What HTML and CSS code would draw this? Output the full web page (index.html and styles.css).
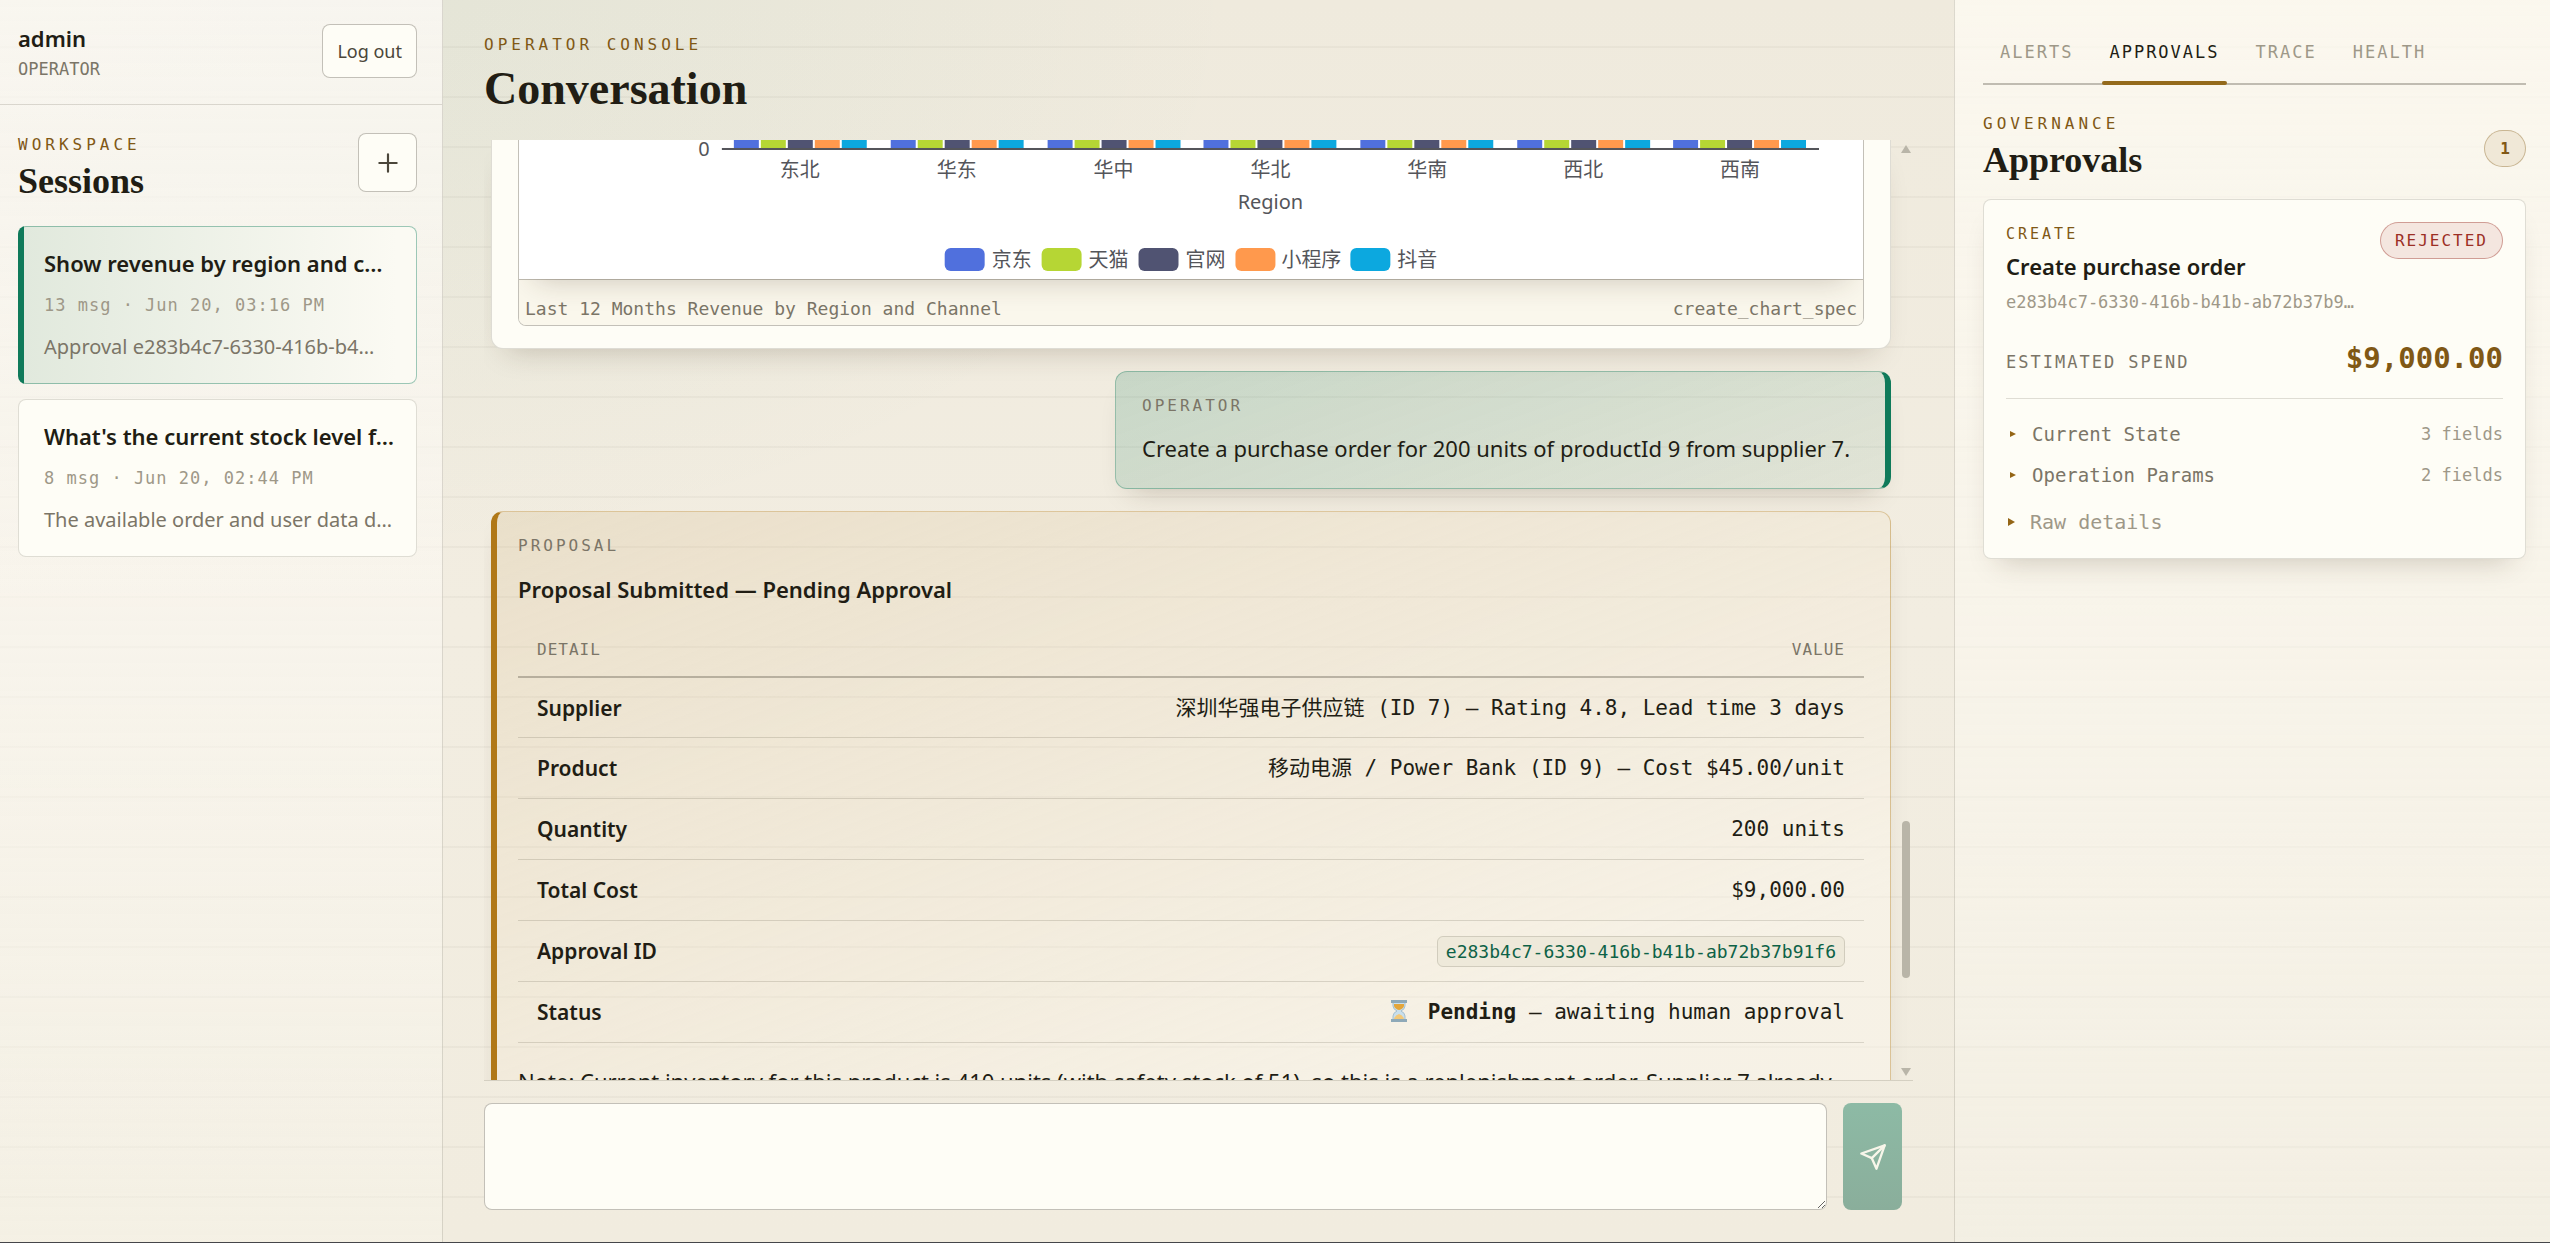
FILE: index.html
```html
<!DOCTYPE html>
<html lang="en">
<head>
    <meta charset="UTF-8">
    <meta name="viewport" content="width=device-width, initial-scale=1.0">
    <title>Operator Console</title>
    <link rel="stylesheet" href="styles.css">
</head>
<body>
    <div class="app">
        <aside class="sidebar">
            <div class="account">
                <div>
                    <div class="account-name">admin</div>
                    <div class="account-role">OPERATOR</div>
                </div>
                <button type="button" class="logout">Log out</button>
            </div>
            <div class="sessions">
                <div class="sessions-head">
                    <div>
                        <p class="eyebrow">WORKSPACE</p>
                        <h2 class="panel-title">Sessions</h2>
                    </div>
                    <button type="button" class="new-session" aria-label="New session">
                        <svg width="26" height="26" viewBox="0 0 24 24" fill="none" stroke="currentColor" stroke-width="2" stroke-linecap="round"><path d="M12 4v16M4 12h16"/></svg>
                    </button>
                </div>
                <button type="button" class="session active">
                    <span class="session-title">Show revenue by region and c…</span>
                    <span class="session-meta">13 msg · Jun 20, 03:16 PM</span>
                    <span class="session-preview">Approval e283b4c7-6330-416b-b4…</span>
                </button>
                <button type="button" class="session">
                    <span class="session-title">What's the current stock level f…</span>
                    <span class="session-meta">8 msg · Jun 20, 02:44 PM</span>
                    <span class="session-preview">The available order and user data d…</span>
                </button>
            </div>
        </aside>

        <main class="conversation">
            <header class="conversation-head">
                <p class="eyebrow">OPERATOR CONSOLE</p>
                <h1>Conversation</h1>
            </header>

            <div class="thread">
                <div class="messages">
                    <article class="message message-chart">
                        <figure class="chart">
                            <svg class="chart-plot" viewBox="519 140 1345 139" role="img" aria-label="Revenue by region and channel">
                                <defs>
                                    <g id="bars">
                                        <rect x="0" y="140" width="25" height="8" fill="#5070dd"/>
                                        <rect x="27" y="140" width="25" height="8" fill="#b6d634"/>
                                        <rect x="54" y="140" width="25" height="8" fill="#505372"/>
                                        <rect x="81" y="140" width="25" height="8" fill="#ff994d"/>
                                        <rect x="108" y="140" width="25" height="8" fill="#0ca8df"/>
                                    </g>
                                </defs>
                                <use href="#bars" x="734"/>
                                <use href="#bars" x="891"/>
                                <use href="#bars" x="1048"/>
                                <use href="#bars" x="1204"/>
                                <use href="#bars" x="1361"/>
                                <use href="#bars" x="1518"/>
                                <use href="#bars" x="1674"/>
                                <rect x="722" y="148" width="1098" height="2" fill="#54555a"/>
                                <g class="chart-text">
                                    <text x="704" y="156" text-anchor="middle">0</text>
                                    <text x="800" y="177" text-anchor="middle">东北</text>
                                    <text x="957" y="177" text-anchor="middle">华东</text>
                                    <text x="1114" y="177" text-anchor="middle">华中</text>
                                    <text x="1271" y="177" text-anchor="middle">华北</text>
                                    <text x="1428" y="177" text-anchor="middle">华南</text>
                                    <text x="1584" y="177" text-anchor="middle">西北</text>
                                    <text x="1741" y="177" text-anchor="middle">西南</text>
                                    <text x="1271" y="209" text-anchor="middle">Region</text>
                                    <text x="992" y="267">京东</text>
                                    <text x="1089" y="267">天猫</text>
                                    <text x="1186" y="267">官网</text>
                                    <text x="1282" y="267">小程序</text>
                                    <text x="1398" y="267">抖音</text>
                                </g>
                                <rect x="945" y="248" width="40" height="23" rx="6" fill="#5070dd"/>
                                <rect x="1042" y="248" width="40" height="23" rx="6" fill="#b6d634"/>
                                <rect x="1139" y="248" width="40" height="23" rx="6" fill="#505372"/>
                                <rect x="1236" y="248" width="40" height="23" rx="6" fill="#ff994d"/>
                                <rect x="1351" y="248" width="40" height="23" rx="6" fill="#0ca8df"/>
                            </svg>
                            <figcaption class="chart-caption">
                                <span>Last 12 Months Revenue by Region and Channel</span>
                                <span>create_chart_spec</span>
                            </figcaption>
                        </figure>
                    </article>

                    <article class="message message-user">
                        <p class="message-label">OPERATOR</p>
                        <p class="message-text">Create a purchase order for 200 units of productId 9 from supplier 7.</p>
                    </article>

                    <article class="message message-proposal">
                        <p class="message-label">PROPOSAL</p>
                        <h3>Proposal Submitted — Pending Approval</h3>
                        <table>
                            <thead>
                                <tr><th scope="col">DETAIL</th><th scope="col">VALUE</th></tr>
                            </thead>
                            <tbody>
                                <tr><th scope="row">Supplier</th><td>深圳华强电子供应链 (ID 7) — Rating 4.8, Lead time 3 days</td></tr>
                                <tr><th scope="row">Product</th><td>移动电源 / Power Bank (ID 9) — Cost $45.00/unit</td></tr>
                                <tr><th scope="row">Quantity</th><td>200 units</td></tr>
                                <tr><th scope="row">Total Cost</th><td>$9,000.00</td></tr>
                                <tr><th scope="row">Approval ID</th><td><code>e283b4c7-6330-416b-b41b-ab72b37b91f6</code></td></tr>
                                <tr>
                                    <th scope="row">Status</th>
                                    <td>
                                        <svg class="hourglass" width="28" height="22" viewBox="0 0 28 22" aria-hidden="true">
                                            <path d="M6 2h12v4q0 3-4 5 4 2 4 5v4H6v-4q0-3 4-5-4-2-4-5z" fill="#c9dfec" stroke="#a5bfce"/>
                                            <path d="M7 4h10v2q-1 3-5 4-4-1-5-4z" fill="#e3a53a"/>
                                            <path d="M12 14q4 1 5 5H7q1-4 5-5z" fill="#f3c877"/>
                                            <path d="M4 0h16v3H4zM4 19h16v3H4z" fill="#8ea9b8"/>
                                        </svg>
                                        <strong>Pending</strong> — awaiting human approval
                                    </td>
                                </tr>
                            </tbody>
                        </table>
                        <p class="message-text">Note: Current inventory for this product is 410 units (with safety stock of 51), so this is a replenishment order. Supplier 7 already</p>
                    </article>
                </div>
                <div class="scrollbar" aria-hidden="true">
                    <svg width="10" height="8" viewBox="0 0 10 8"><path d="M5 0l5 8H0z" fill="#b9b5a8"/></svg>
                    <div class="scrollbar-track"><div class="scrollbar-thumb"></div></div>
                    <svg width="10" height="8" viewBox="0 0 10 8"><path d="M0 0h10L5 8z" fill="#b9b5a8"/></svg>
                </div>
            </div>

            <form class="composer">
                <textarea aria-label="Message"></textarea>
                <button type="submit" class="send" aria-label="Send">
                    <svg width="28" height="28" viewBox="0 0 24 24" fill="none" stroke="currentColor" stroke-width="2" stroke-linecap="round" stroke-linejoin="round"><path d="M22 2 2 9l9 4 4 9z"/><path d="M22 2 11 13"/></svg>
                </button>
            </form>
        </main>

        <aside class="inspector">
            <nav class="tabs">
                <button type="button">ALERTS</button>
                <button type="button" class="selected">APPROVALS</button>
                <button type="button">TRACE</button>
                <button type="button">HEALTH</button>
            </nav>
            <div class="approvals-head">
                <div>
                    <p class="eyebrow">GOVERNANCE</p>
                    <h2 class="panel-title">Approvals</h2>
                </div>
                <span class="count">1</span>
            </div>
            <section class="approval">
                <div class="approval-top">
                    <div>
                        <p class="approval-kind">CREATE</p>
                        <h3>Create purchase order</h3>
                        <p class="approval-id">e283b4c7-6330-416b-b41b-ab72b37b9…</p>
                    </div>
                    <span class="status">REJECTED</span>
                </div>
                <div class="spend">
                    <span class="spend-label">ESTIMATED SPEND</span>
                    <span class="spend-value">$9,000.00</span>
                </div>
                <button type="button" class="fold">
                    <svg width="14" height="8" viewBox="0 0 14 8"><path d="M4 1l6 3-6 3z" fill="currentColor"/></svg>
                    <span class="fold-name">Current State</span>
                    <span class="fold-count">3 fields</span>
                </button>
                <button type="button" class="fold">
                    <svg width="14" height="8" viewBox="0 0 14 8"><path d="M4 1l6 3-6 3z" fill="currentColor"/></svg>
                    <span class="fold-name">Operation Params</span>
                    <span class="fold-count">2 fields</span>
                </button>
                <button type="button" class="fold fold-raw">
                    <svg width="12" height="8" viewBox="0 0 12 8"><path d="M2 0l7 4-7 4z" fill="currentColor"/></svg>
                    <span class="fold-name">Raw details</span>
                </button>
            </section>
        </aside>
    </div>
</body>
</html>
```

FILE: styles.css
```css
:root {
    --ink: #211d14;
    --muted: #7b7567;
    --faint: #9e9888;
    --gold: #805815;
    --green: #0f7a5a;
    --paper: #fefdf6;
    --line: rgba(60, 54, 40, 0.16);
    --line-strong: rgba(60, 54, 40, 0.3);
    --sans: "Noto Sans", "Noto Sans CJK SC", sans-serif;
    --mono: "DejaVu Sans Mono", "Noto Sans CJK SC", monospace;
    --serif: "Liberation Serif", serif;
}
* {
    box-sizing: border-box;
}
body {
    margin: 0;
    font-family: var(--sans);
    font-size: 21px;
    line-height: 32px;
    color: var(--ink);
    background:
        radial-gradient(ellipse 35% 45% at 14% 0, rgba(15, 122, 90, 0.05), transparent),
        linear-gradient(180deg, #efeadd, #f2ede1 50%, #f1ecdf);
}
h1, h2, h3, p, figure {
    margin: 0;
}
button {
    font: inherit;
    color: inherit;
    cursor: pointer;
}
.app {
    display: grid;
    grid-template-columns: 443px minmax(0, 1fr) 596px;
    grid-template-rows: minmax(0, 1fr);
    height: 100vh;
    border-bottom: 1px solid #45464a;
    background: repeating-linear-gradient(180deg, transparent 0 46px, rgba(60, 54, 40, 0.04) 46px 48px, transparent 48px 50px);
}
.eyebrow {
    font-family: var(--mono);
    font-size: 16px;
    line-height: 24px;
    letter-spacing: 4px;
    color: var(--gold);
}
.panel-title {
    font-family: var(--serif);
    font-size: 36px;
    line-height: 48px;
    font-weight: bold;
}

/* sidebar */
.sidebar {
    border-right: 1px solid var(--line);
    background: linear-gradient(180deg, rgba(254, 251, 247, 0.75), rgba(248, 246, 236, 0.4));
}
.account {
    display: flex;
    justify-content: space-between;
    align-items: flex-start;
    height: 105px;
    padding: 24px 25px 0 18px;
    border-bottom: 1px solid var(--line);
}
.account-name {
    font-size: 22px;
    line-height: 28px;
    font-weight: 600;
}
.account-role {
    font-family: var(--mono);
    font-size: 17px;
    line-height: 34px;
    color: var(--muted);
}
.logout,
.new-session {
    background: var(--paper);
    border: 1px solid var(--line-strong);
    border-radius: 8px;
    color: #4b463a;
}
.logout {
    height: 54px;
    padding: 0 14px;
    font-size: 18px;
}
.sessions {
    display: flex;
    flex-direction: column;
    gap: 15px;
    padding: 28px 25px 0 18px;
}
.sessions-head {
    display: flex;
    justify-content: space-between;
    align-items: flex-start;
    height: 78px;
}
.new-session {
    display: grid;
    place-items: center;
    width: 59px;
    height: 59px;
    padding: 0;
}
.session {
    display: flex;
    flex-direction: column;
    gap: 10px;
    height: 158px;
    padding: 20px 12px 0 25px;
    text-align: left;
    white-space: nowrap;
    overflow: hidden;
    background: var(--paper);
    border: 1px solid var(--line);
    border-radius: 8px;
}
.session.active {
    border-color: rgba(15, 122, 90, 0.4);
    background: linear-gradient(90deg, var(--green) 6px, #e1e9dd 6px, #fbfaf3 95%) border-box;
}
.session-title {
    font-size: 22px;
    font-weight: 600;
}
.session-meta {
    font-family: var(--mono);
    font-size: 17px;
    letter-spacing: 1px;
    color: var(--faint);
}
.session-preview {
    font-size: 20px;
    color: var(--muted);
}

/* conversation */
.conversation {
    display: flex;
    flex-direction: column;
    padding: 33px 41px 32px;
}
.conversation-head {
    height: 107px;
}
.conversation-head h1 {
    font-family: var(--serif);
    font-size: 46px;
    line-height: 64px;
}
.thread {
    flex: 1;
    display: flex;
    min-height: 0;
    overflow: hidden;
    padding-left: 7px;
}
.messages {
    flex: 1;
    display: flex;
    flex-direction: column;
    gap: 22px;
    min-width: 0;
}
.message {
    flex-shrink: 0;
    border: 1px solid var(--line);
    border-radius: 12px;
    box-shadow: 0 16px 28px -16px rgba(60, 40, 20, 0.25);
}
.message-chart {
    padding: 0 26px 22px;
    border-top: 0;
    border-radius: 0 0 12px 12px;
    background: var(--paper);
}
.chart {
    border: 1px solid var(--line-strong);
    border-top: 0;
    border-radius: 0 0 8px 8px;
    overflow: hidden;
}
.chart-plot {
    position: relative;
    display: block;
    width: 100%;
    background: #fff;
    box-shadow: 0 16px 28px -16px rgba(60, 40, 20, 0.25);
}
.chart-text {
    font-family: "Noto Sans", "Noto Sans CJK SC", sans-serif;
    font-size: 20px;
    fill: #54555a;
}
.chart-caption {
    display: flex;
    justify-content: space-between;
    padding: 13px 6px 0;
    height: 46px;
    border-top: 1px solid var(--line-strong);
    background: #faf7ec;
    font-family: var(--mono);
    font-size: 18px;
    color: var(--muted);
}
.message-label {
    font-family: var(--mono);
    font-size: 16px;
    line-height: 24px;
    letter-spacing: 3px;
    color: var(--muted);
}
.message-text {
    font-size: 22px;
    line-height: 36px;
}
.message-user {
    align-self: flex-end;
    display: flex;
    flex-direction: column;
    gap: 12px;
    min-width: 776px;
    padding: 22px 21px 22px 26px;
    border-color: rgba(15, 122, 90, 0.35);
    border-right: 6px solid var(--green);
    background: linear-gradient(160deg, rgba(15, 122, 90, 0.18), rgba(15, 122, 90, 0.07));
}
.message-proposal {
    padding: 22px 26px 22px 21px;
    border-color: rgba(176, 120, 24, 0.35);
    border-left: 6px solid #b07818;
    background: linear-gradient(160deg, rgba(176, 120, 24, 0.11), rgba(255, 250, 240, 0.4) 80%);
}
.message-proposal .message-label {
    margin-bottom: 13px;
}
.message-proposal h3 {
    font-size: 22px;
    line-height: 36px;
    font-weight: 600;
}
.message-proposal table {
    width: 100%;
    margin: 18px 0 20px;
    border-collapse: collapse;
}
.message-proposal th,
.message-proposal td {
    height: 61px;
    padding: 0 19px;
    text-align: left;
    border-bottom: 1px solid var(--line);
}
.message-proposal thead th {
    height: 52px;
    font-family: var(--mono);
    font-size: 16px;
    font-weight: normal;
    letter-spacing: 1px;
    color: var(--muted);
    border-bottom: 2px solid var(--line-strong);
}
.message-proposal tbody th {
    font-weight: 600;
}
.message-proposal td,
.message-proposal thead th:last-child {
    text-align: right;
}
.message-proposal td {
    font-family: var(--mono);
}
.message-proposal code {
    padding: 4px 8px;
    font-family: var(--mono);
    font-size: 18px;
    color: #0d6247;
    background: #eee9da;
    border: 1px solid var(--line);
    border-radius: 6px;
}
.hourglass {
    vertical-align: -3px;
}
.scrollbar {
    display: flex;
    flex-direction: column;
    align-items: center;
    width: 22px;
    padding: 5px 0 4px 8px;
}
.scrollbar-track {
    flex: 1;
    width: 8px;
    padding-top: 668px;
}
.scrollbar-thumb {
    height: 157px;
    border-radius: 4px;
    background: #b9b5a8;
}
.composer {
    display: flex;
    gap: 16px;
    padding: 22px 11px 0 0;
    border-top: 1px solid var(--line);
}
.composer textarea {
    flex: 1;
    height: 107px;
    padding: 16px;
    font: inherit;
    color: inherit;
    background: var(--paper);
    border: 1px solid var(--line-strong);
    border-radius: 8px;
}
.send {
    display: grid;
    place-items: center;
    width: 59px;
    padding: 0;
    border: 0;
    border-radius: 8px;
    color: #f8f6ea;
    background: linear-gradient(180deg, #8dbaa5, #8aae9b);
}

/* inspector */
.inspector {
    padding: 32px 24px 0 28px;
    border-left: 1px solid var(--line);
    background: linear-gradient(180deg, rgba(255, 252, 244, 0.75), rgba(248, 246, 236, 0.3));
}
.tabs {
    display: flex;
    gap: 2px;
    height: 53px;
    border-bottom: 2px solid var(--line-strong);
}
.tabs button {
    display: flex;
    flex-direction: column;
    justify-content: space-between;
    margin-bottom: -2px;
    padding: 4px 17px 0;
    border: 0;
    background: none;
    font-family: var(--mono);
    font-size: 17px;
    letter-spacing: 2px;
    color: var(--faint);
}
.tabs .selected {
    color: var(--ink);
}
.tabs .selected::after {
    content: "";
    height: 4px;
    margin: 0 -7px;
    border-radius: 2px;
    background: #946a1c;
}
.approvals-head {
    display: flex;
    justify-content: space-between;
    align-items: center;
    margin: 27px 0 15px;
}
.count,
.status {
    height: 37px;
    padding: 0 15px;
    font-family: var(--mono);
    font-size: 16px;
    line-height: 35px;
    font-weight: bold;
    border: 1px solid rgba(128, 88, 21, 0.35);
    border-radius: 19px;
    color: var(--gold);
    background: #f0e8d7;
}
.status {
    letter-spacing: 2px;
    padding: 0 14px;
    font-weight: normal;
    color: #9c2f25;
    border-color: rgba(156, 47, 37, 0.4);
    background: #f4e6df;
}
.approval {
    padding: 22px 22px 16px;
    border: 1px solid var(--line);
    border-radius: 8px;
    background: var(--paper);
    box-shadow: 0 16px 28px -16px rgba(60, 40, 20, 0.25);
}
.approval-top {
    display: flex;
    justify-content: space-between;
    align-items: flex-start;
}
.approval-kind {
    font-family: var(--mono);
    font-size: 15px;
    line-height: 24px;
    letter-spacing: 3px;
    color: var(--gold);
}
.approval h3 {
    font-size: 22px;
    line-height: 40px;
    font-weight: 600;
}
.approval-id {
    font-family: var(--mono);
    font-size: 17px;
    line-height: 32px;
    color: var(--faint);
}
.spend {
    display: flex;
    justify-content: space-between;
    align-items: baseline;
    margin-bottom: 14px;
    padding: 24px 0 20px;
    border-bottom: 1px solid var(--line);
}
.spend-label {
    font-family: var(--mono);
    font-size: 17px;
    letter-spacing: 2px;
    color: var(--muted);
}
.spend-value {
    font-family: var(--mono);
    font-size: 29px;
    font-weight: bold;
    color: var(--gold);
}
.fold {
    display: flex;
    align-items: center;
    width: 100%;
    height: 41px;
    padding: 0;
    border: 0;
    background: none;
    font-family: var(--mono);
    font-size: 19px;
    color: #946516;
}
.fold-name {
    flex: 1;
    padding-left: 12px;
    text-align: left;
    color: var(--muted);
}
.fold-count {
    font-size: 17px;
    color: var(--faint);
}
.fold-raw {
    margin-top: 6px;
    font-size: 20px;
}
.fold-raw .fold-name {
    color: var(--faint);
}
```
